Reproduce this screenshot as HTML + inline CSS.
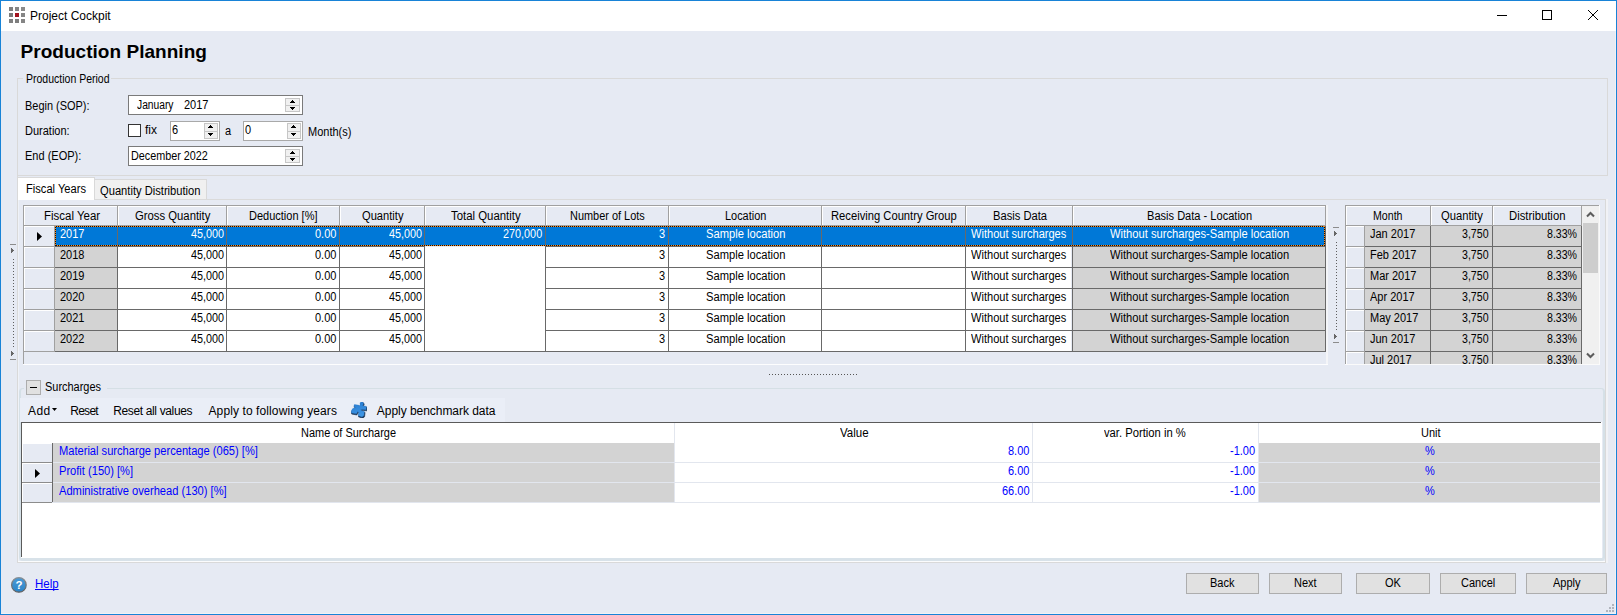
<!DOCTYPE html>
<html><head><meta charset="utf-8"><title>Project Cockpit</title>
<style>
html,body{margin:0;padding:0;}
body{width:1617px;height:615px;overflow:hidden;background:#e6eaf3;position:relative;font-family:"Liberation Sans",sans-serif;font-size:11px;color:#000;}
.a{position:absolute;}
.t{position:absolute;white-space:nowrap;transform-origin:0 0;}
#win{position:absolute;left:0;top:0;width:1615px;height:613px;border:1px solid #1883d7;z-index:5;pointer-events:none}
#title{position:absolute;left:1px;top:1px;width:1615px;height:30px;background:#fff;}
.inp{position:absolute;background:#fff;border:1px solid #7a7a7a;box-sizing:border-box;}
.btn{position:absolute;box-sizing:border-box;border:1px solid #adadad;background:#e1e1e1;height:21px;top:573px;}
</style></head><body>
<div id="title"></div>
<svg class="a" style="left:9px;top:7px" width="16" height="16" viewBox="0 0 16 16">
<rect x="0" y="0" width="4" height="4" fill="#7f7f7f"/>
<rect x="6" y="0" width="4" height="4" fill="#858585"/>
<rect x="12" y="0" width="4" height="4" fill="#8a8a8a"/>
<rect x="0" y="6" width="4" height="4" fill="#7a7a7a"/>
<rect x="6" y="6" width="4" height="4" fill="#a3131f"/>
<rect x="12" y="6" width="4" height="4" fill="#858585"/>
<rect x="0" y="12" width="4" height="4" fill="#808080"/>
<rect x="6" y="12" width="4" height="4" fill="#7d7d7d"/>
<rect x="12" y="12" width="4" height="4" fill="#858585"/>
</svg>
<div class="t" style="left:30.00px;top:9px;font-size:12px;line-height:14px;height:14px;">Project Cockpit</div>
<svg class="a" style="left:1480px;top:1px" width="136" height="30" viewBox="0 0 136 30" fill="none" stroke="#000" stroke-width="1"><path d="M17 14.5h10"/><rect x="62.5" y="9.5" width="9" height="9"/><path d="M108 9l10 10M118 9l-10 10"/></svg>
<div class="t" style="left:20.50px;top:40px;font-size:19px;line-height:23px;height:23px;letter-spacing:0.034px;font-weight:bold;">Production Planning</div>
<div class="a" style="left:17px;top:78px;width:1591px;height:1px;background:#d9d9d9;"></div>
<div class="a" style="left:17px;top:78px;width:1px;height:485px;background:#d9d9d9;"></div>
<div class="a" style="left:1607px;top:78px;width:1px;height:98px;background:#d9d9d9;"></div>
<div class="a" style="left:1605px;top:199px;width:1px;height:364px;background:#d9d9d9;"></div>
<div class="a" style="left:17px;top:562px;width:1589px;height:1px;background:#d9d9d9;"></div>
<div class="a" style="left:1606px;top:199px;width:2px;height:364px;background:#f1f2f6;"></div>
<div class="a" style="left:18px;top:561px;width:1587px;height:1px;background:#fbfcfd;"></div>
<div class="a" style="left:18px;top:199px;width:1px;height:362px;background:#eff2f8;"></div>
<div class="a" style="left:23px;top:72px;width:88px;height:13px;background:#e6eaf3;"></div>
<div class="t" style="left:26.00px;top:72px;font-size:12px;line-height:14px;height:14px;transform:scaleX(0.8754);">Production Period</div>
<div class="a" style="left:18px;top:175px;width:1590px;height:1px;background:#d9d9d9;"></div>
<div class="t" style="left:25.00px;top:99px;font-size:12px;line-height:14px;height:14px;transform:scaleX(0.9124);">Begin (SOP):</div>
<div class="t" style="left:25.00px;top:124px;font-size:12px;line-height:14px;height:14px;transform:scaleX(0.9167);">Duration:</div>
<div class="t" style="left:25.00px;top:149px;font-size:12px;line-height:14px;height:14px;transform:scaleX(0.9167);">End (EOP):</div>
<div class="inp" style="left:128px;top:95px;width:175px;height:20px"></div>
<div class="t" style="left:136.50px;top:98px;font-size:12px;line-height:14px;height:14px;transform:scaleX(0.8550);">January</div>
<div class="t" style="left:184.00px;top:98px;font-size:12px;line-height:14px;height:14px;transform:scaleX(0.9167);">2017</div>
<div class="a" style="left:285px;top:98px;width:15px;height:14px;background:#f0f0f0;box-sizing:border-box;border:1px solid #c6c6c6;"></div>
<div class="a" style="left:286px;top:105px;width:13px;height:1px;background:#c6c6c6;"></div>
<div class="a" style="left:292px;top:100px;width:1px;height:1px;background:#000;"></div>
<div class="a" style="left:291px;top:101px;width:3px;height:1px;background:#000;"></div>
<div class="a" style="left:290px;top:102px;width:5px;height:1px;background:#000;"></div>
<div class="a" style="left:290px;top:107px;width:5px;height:1px;background:#000;"></div>
<div class="a" style="left:291px;top:108px;width:3px;height:1px;background:#000;"></div>
<div class="a" style="left:292px;top:109px;width:1px;height:1px;background:#000;"></div>
<div class="a" style="left:128px;top:124px;width:13px;height:13px;box-sizing:border-box;border:1px solid #333;background:#fff"></div>
<div class="t" style="left:145.00px;top:123px;font-size:12px;line-height:14px;height:14px;transform:scaleX(1.0000);">fix</div>
<div class="inp" style="left:170px;top:121px;width:50px;height:20px;border-color:#a9a9a9"></div>
<div class="t" style="left:172.30px;top:123px;font-size:12px;line-height:14px;height:14px;transform:scaleX(0.9167);">6</div>
<div class="a" style="left:204px;top:123px;width:14px;height:16px;background:#f0f0f0;box-sizing:border-box;border:1px solid #c6c6c6;"></div>
<div class="a" style="left:205px;top:131px;width:12px;height:1px;background:#c6c6c6;"></div>
<div class="a" style="left:210px;top:125px;width:1px;height:1px;background:#000;"></div>
<div class="a" style="left:209px;top:126px;width:3px;height:1px;background:#000;"></div>
<div class="a" style="left:208px;top:127px;width:5px;height:1px;background:#000;"></div>
<div class="a" style="left:208px;top:133px;width:5px;height:1px;background:#000;"></div>
<div class="a" style="left:209px;top:134px;width:3px;height:1px;background:#000;"></div>
<div class="a" style="left:210px;top:135px;width:1px;height:1px;background:#000;"></div>
<div class="t" style="left:225.00px;top:124px;font-size:12px;line-height:14px;height:14px;transform:scaleX(0.9167);">a</div>
<div class="inp" style="left:243px;top:121px;width:60px;height:20px;border-color:#a9a9a9"></div>
<div class="t" style="left:245.00px;top:123px;font-size:12px;line-height:14px;height:14px;transform:scaleX(0.9167);">0</div>
<div class="a" style="left:287px;top:123px;width:14px;height:16px;background:#f0f0f0;box-sizing:border-box;border:1px solid #c6c6c6;"></div>
<div class="a" style="left:288px;top:131px;width:12px;height:1px;background:#c6c6c6;"></div>
<div class="a" style="left:293px;top:125px;width:1px;height:1px;background:#000;"></div>
<div class="a" style="left:292px;top:126px;width:3px;height:1px;background:#000;"></div>
<div class="a" style="left:291px;top:127px;width:5px;height:1px;background:#000;"></div>
<div class="a" style="left:291px;top:133px;width:5px;height:1px;background:#000;"></div>
<div class="a" style="left:292px;top:134px;width:3px;height:1px;background:#000;"></div>
<div class="a" style="left:293px;top:135px;width:1px;height:1px;background:#000;"></div>
<div class="t" style="left:308.30px;top:125px;font-size:12px;line-height:14px;height:14px;transform:scaleX(0.9167);">Month(s)</div>
<div class="inp" style="left:128px;top:146px;width:175px;height:20px"></div>
<div class="t" style="left:130.80px;top:149px;font-size:12px;line-height:14px;height:14px;transform:scaleX(0.9003);">December 2022</div>
<div class="a" style="left:285px;top:149px;width:15px;height:14px;background:#f0f0f0;box-sizing:border-box;border:1px solid #c6c6c6;"></div>
<div class="a" style="left:286px;top:156px;width:13px;height:1px;background:#c6c6c6;"></div>
<div class="a" style="left:292px;top:151px;width:1px;height:1px;background:#000;"></div>
<div class="a" style="left:291px;top:152px;width:3px;height:1px;background:#000;"></div>
<div class="a" style="left:290px;top:153px;width:5px;height:1px;background:#000;"></div>
<div class="a" style="left:290px;top:158px;width:5px;height:1px;background:#000;"></div>
<div class="a" style="left:291px;top:159px;width:3px;height:1px;background:#000;"></div>
<div class="a" style="left:292px;top:160px;width:1px;height:1px;background:#000;"></div>
<div class="a" style="left:94px;top:179px;width:113px;height:20px;background:#f0f0f0;box-sizing:border-box;border:1px solid #d9d9d9;border-left:none;border-bottom:none;"></div>
<div class="a" style="left:94px;top:199px;width:1512px;height:1px;background:#dadada;"></div>
<div class="a" style="left:17px;top:177px;width:78px;height:23px;background:#fff;box-sizing:border-box;border:1px solid #d9d9d9;border-bottom:none;"></div>
<div class="t" style="left:26.00px;top:182px;font-size:12px;line-height:14px;height:14px;transform:scaleX(0.9274);">Fiscal Years</div>
<div class="t" style="left:100.00px;top:184px;font-size:12px;line-height:14px;height:14px;transform:scaleX(0.9302);">Quantity Distribution</div>
<div class="a" style="left:23px;top:205px;width:1303px;height:160px;background:#e6eaf3;"></div>
<div class="a" style="left:55px;top:226px;width:62px;height:20px;background:#d3d3d3;"></div>
<div class="a" style="left:118px;top:226px;width:953px;height:20px;background:#fff;"></div>
<div class="a" style="left:1073px;top:226px;width:252px;height:20px;background:#d3d3d3;"></div>
<div class="a" style="left:55px;top:247px;width:62px;height:20px;background:#d3d3d3;"></div>
<div class="a" style="left:118px;top:247px;width:953px;height:20px;background:#fff;"></div>
<div class="a" style="left:1073px;top:247px;width:252px;height:20px;background:#d3d3d3;"></div>
<div class="a" style="left:55px;top:268px;width:62px;height:20px;background:#d3d3d3;"></div>
<div class="a" style="left:118px;top:268px;width:953px;height:20px;background:#fff;"></div>
<div class="a" style="left:1073px;top:268px;width:252px;height:20px;background:#d3d3d3;"></div>
<div class="a" style="left:55px;top:289px;width:62px;height:20px;background:#d3d3d3;"></div>
<div class="a" style="left:118px;top:289px;width:953px;height:20px;background:#fff;"></div>
<div class="a" style="left:1073px;top:289px;width:252px;height:20px;background:#d3d3d3;"></div>
<div class="a" style="left:55px;top:310px;width:62px;height:20px;background:#d3d3d3;"></div>
<div class="a" style="left:118px;top:310px;width:953px;height:20px;background:#fff;"></div>
<div class="a" style="left:1073px;top:310px;width:252px;height:20px;background:#d3d3d3;"></div>
<div class="a" style="left:55px;top:331px;width:62px;height:20px;background:#d3d3d3;"></div>
<div class="a" style="left:118px;top:331px;width:953px;height:20px;background:#fff;"></div>
<div class="a" style="left:1073px;top:331px;width:252px;height:20px;background:#d3d3d3;"></div>
<div class="a" style="left:54px;top:226px;width:1272px;height:20px;background:#0078d7;"></div>
<div class="a" style="left:23px;top:205px;width:1303px;height:1px;background:#a0a0a0;"></div>
<div class="a" style="left:23px;top:205px;width:1px;height:159px;background:#a0a0a0;"></div>
<div class="a" style="left:24px;top:225px;width:1302px;height:1px;background:#a0a0a0;"></div>
<div class="a" style="left:55px;top:246px;width:369px;height:1px;background:#696969;"></div>
<div class="a" style="left:546px;top:246px;width:780px;height:1px;background:#696969;"></div>
<div class="a" style="left:55px;top:267px;width:369px;height:1px;background:#696969;"></div>
<div class="a" style="left:546px;top:267px;width:780px;height:1px;background:#696969;"></div>
<div class="a" style="left:55px;top:288px;width:369px;height:1px;background:#696969;"></div>
<div class="a" style="left:546px;top:288px;width:780px;height:1px;background:#696969;"></div>
<div class="a" style="left:55px;top:309px;width:369px;height:1px;background:#696969;"></div>
<div class="a" style="left:546px;top:309px;width:780px;height:1px;background:#696969;"></div>
<div class="a" style="left:55px;top:330px;width:369px;height:1px;background:#696969;"></div>
<div class="a" style="left:546px;top:330px;width:780px;height:1px;background:#696969;"></div>
<div class="a" style="left:55px;top:351px;width:369px;height:1px;background:#696969;"></div>
<div class="a" style="left:546px;top:351px;width:780px;height:1px;background:#696969;"></div>
<div class="a" style="left:55px;top:351px;width:1271px;height:1px;background:#696969;"></div>
<div class="a" style="left:117px;top:206px;width:1px;height:20px;background:#a0a0a0;"></div>
<div class="a" style="left:117px;top:226px;width:1px;height:126px;background:#696969;"></div>
<div class="a" style="left:226px;top:206px;width:1px;height:20px;background:#a0a0a0;"></div>
<div class="a" style="left:226px;top:226px;width:1px;height:126px;background:#696969;"></div>
<div class="a" style="left:339px;top:206px;width:1px;height:20px;background:#a0a0a0;"></div>
<div class="a" style="left:339px;top:226px;width:1px;height:126px;background:#696969;"></div>
<div class="a" style="left:424px;top:206px;width:1px;height:20px;background:#a0a0a0;"></div>
<div class="a" style="left:424px;top:226px;width:1px;height:126px;background:#696969;"></div>
<div class="a" style="left:545px;top:206px;width:1px;height:20px;background:#a0a0a0;"></div>
<div class="a" style="left:545px;top:226px;width:1px;height:126px;background:#696969;"></div>
<div class="a" style="left:668px;top:206px;width:1px;height:20px;background:#a0a0a0;"></div>
<div class="a" style="left:668px;top:226px;width:1px;height:126px;background:#696969;"></div>
<div class="a" style="left:821px;top:206px;width:1px;height:20px;background:#a0a0a0;"></div>
<div class="a" style="left:821px;top:226px;width:1px;height:126px;background:#696969;"></div>
<div class="a" style="left:965px;top:206px;width:1px;height:20px;background:#a0a0a0;"></div>
<div class="a" style="left:965px;top:226px;width:1px;height:126px;background:#696969;"></div>
<div class="a" style="left:1072px;top:206px;width:1px;height:20px;background:#a0a0a0;"></div>
<div class="a" style="left:1072px;top:226px;width:1px;height:126px;background:#696969;"></div>
<div class="a" style="left:1325px;top:206px;width:1px;height:20px;background:#a0a0a0;"></div>
<div class="a" style="left:1325px;top:226px;width:1px;height:126px;background:#696969;"></div>
<div class="a" style="left:54px;top:226px;width:1px;height:126px;background:#a0a0a0;"></div>
<div class="a" style="left:24px;top:246px;width:31px;height:1px;background:#a0a0a0;"></div>
<div class="a" style="left:24px;top:267px;width:31px;height:1px;background:#a0a0a0;"></div>
<div class="a" style="left:24px;top:288px;width:31px;height:1px;background:#a0a0a0;"></div>
<div class="a" style="left:24px;top:309px;width:31px;height:1px;background:#a0a0a0;"></div>
<div class="a" style="left:24px;top:330px;width:31px;height:1px;background:#a0a0a0;"></div>
<div class="a" style="left:24px;top:351px;width:31px;height:1px;background:#a0a0a0;"></div>
<div class="a" style="left:24px;top:206px;width:1px;height:19px;background:#fff;"></div>
<div class="a" style="left:118px;top:206px;width:1px;height:19px;background:#fff;"></div>
<div class="a" style="left:227px;top:206px;width:1px;height:19px;background:#fff;"></div>
<div class="a" style="left:340px;top:206px;width:1px;height:19px;background:#fff;"></div>
<div class="a" style="left:425px;top:206px;width:1px;height:19px;background:#fff;"></div>
<div class="a" style="left:546px;top:206px;width:1px;height:19px;background:#fff;"></div>
<div class="a" style="left:669px;top:206px;width:1px;height:19px;background:#fff;"></div>
<div class="a" style="left:822px;top:206px;width:1px;height:19px;background:#fff;"></div>
<div class="a" style="left:966px;top:206px;width:1px;height:19px;background:#fff;"></div>
<div class="a" style="left:1073px;top:206px;width:1px;height:19px;background:#fff;"></div>
<div class="a" style="left:24px;top:206px;width:1301px;height:1px;background:#fff;"></div>
<div class="a" style="left:117px;top:206px;width:1px;height:1px;background:#a0a0a0;"></div>
<div class="a" style="left:226px;top:206px;width:1px;height:1px;background:#a0a0a0;"></div>
<div class="a" style="left:339px;top:206px;width:1px;height:1px;background:#a0a0a0;"></div>
<div class="a" style="left:424px;top:206px;width:1px;height:1px;background:#a0a0a0;"></div>
<div class="a" style="left:545px;top:206px;width:1px;height:1px;background:#a0a0a0;"></div>
<div class="a" style="left:668px;top:206px;width:1px;height:1px;background:#a0a0a0;"></div>
<div class="a" style="left:821px;top:206px;width:1px;height:1px;background:#a0a0a0;"></div>
<div class="a" style="left:965px;top:206px;width:1px;height:1px;background:#a0a0a0;"></div>
<div class="a" style="left:1072px;top:206px;width:1px;height:1px;background:#a0a0a0;"></div>
<div class="a" style="left:1325px;top:206px;width:1px;height:1px;background:#a0a0a0;"></div>
<div class="a" style="left:24px;top:226px;width:30px;height:1px;background:#fff;"></div>
<div class="a" style="left:24px;top:226px;width:1px;height:20px;background:#fff;"></div>
<div class="a" style="left:24px;top:247px;width:30px;height:1px;background:#fff;"></div>
<div class="a" style="left:24px;top:247px;width:1px;height:20px;background:#fff;"></div>
<div class="a" style="left:24px;top:268px;width:30px;height:1px;background:#fff;"></div>
<div class="a" style="left:24px;top:268px;width:1px;height:20px;background:#fff;"></div>
<div class="a" style="left:24px;top:289px;width:30px;height:1px;background:#fff;"></div>
<div class="a" style="left:24px;top:289px;width:1px;height:20px;background:#fff;"></div>
<div class="a" style="left:24px;top:310px;width:30px;height:1px;background:#fff;"></div>
<div class="a" style="left:24px;top:310px;width:1px;height:20px;background:#fff;"></div>
<div class="a" style="left:24px;top:331px;width:30px;height:1px;background:#fff;"></div>
<div class="a" style="left:24px;top:331px;width:1px;height:20px;background:#fff;"></div>
<div class="a" style="left:425px;top:247px;width:120px;height:104px;background:#fff;"></div>
<div class="a" style="left:55px;top:226px;width:1270px;height:1px;background:repeating-linear-gradient(to right,#ff8c1a 0 1px,#101010 1px 2px);"></div>
<div class="a" style="left:55px;top:245px;width:1270px;height:1px;background:repeating-linear-gradient(to right,#ff8c1a 0 1px,#101010 1px 2px);"></div>
<div class="a" style="left:55px;top:226px;width:1px;height:20px;background:repeating-linear-gradient(to bottom,#ff8c1a 0 1px,#101010 1px 2px);"></div>
<div class="a" style="left:1324px;top:226px;width:1px;height:20px;background:repeating-linear-gradient(to bottom,#ff8c1a 0 1px,#101010 1px 2px);"></div>
<div class="t" style="left:43.55px;top:209px;font-size:12px;line-height:14px;height:14px;transform:scaleX(0.9559);">Fiscal Year</div>
<div class="t" style="left:135.32px;top:209px;font-size:12px;line-height:14px;height:14px;transform:scaleX(0.9417);">Gross Quantity</div>
<div class="t" style="left:249.36px;top:209px;font-size:12px;line-height:14px;height:14px;transform:scaleX(0.9167);">Deduction [%]</div>
<div class="t" style="left:361.57px;top:209px;font-size:12px;line-height:14px;height:14px;transform:scaleX(0.9279);">Quantity</div>
<div class="t" style="left:450.77px;top:209px;font-size:12px;line-height:14px;height:14px;transform:scaleX(0.9494);">Total Quantity</div>
<div class="t" style="left:569.95px;top:209px;font-size:12px;line-height:14px;height:14px;transform:scaleX(0.9106);">Number of Lots</div>
<div class="t" style="left:725.16px;top:209px;font-size:12px;line-height:14px;height:14px;transform:scaleX(0.9101);">Location</div>
<div class="t" style="left:831.20px;top:209px;font-size:12px;line-height:14px;height:14px;transform:scaleX(0.9337);">Receiving Country Group</div>
<div class="t" style="left:992.96px;top:209px;font-size:12px;line-height:14px;height:14px;transform:scaleX(0.9322);">Basis Data</div>
<div class="t" style="left:1146.73px;top:209px;font-size:12px;line-height:14px;height:14px;transform:scaleX(0.9219);">Basis Data - Location</div>
<svg class="a" style="left:36px;top:231px" width="8" height="11"><path d="M1 1v9l5-4.5z" fill="#000"/></svg>
<div class="t" style="left:60.00px;top:227px;font-size:12px;line-height:14px;height:14px;transform:scaleX(0.9167);color:#fff;">2017</div>
<div class="t" style="left:191.26px;top:227px;font-size:12px;line-height:14px;height:14px;transform:scaleX(0.9003);color:#fff;">45,000</div>
<div class="t" style="left:315.09px;top:227px;font-size:12px;line-height:14px;height:14px;transform:scaleX(0.9167);color:#fff;">0.00</div>
<div class="t" style="left:388.76px;top:227px;font-size:12px;line-height:14px;height:14px;transform:scaleX(0.9003);color:#fff;">45,000</div>
<div class="t" style="left:502.64px;top:227px;font-size:12px;line-height:14px;height:14px;transform:scaleX(0.9028);color:#fff;">270,000</div>
<div class="t" style="left:659.18px;top:227px;font-size:12px;line-height:14px;height:14px;transform:scaleX(0.9167);color:#fff;">3</div>
<div class="t" style="left:706.05px;top:227px;font-size:12px;line-height:14px;height:14px;transform:scaleX(0.9312);color:#fff;">Sample location</div>
<div class="t" style="left:971.05px;top:227px;font-size:12px;line-height:14px;height:14px;transform:scaleX(0.9219);color:#fff;">Without surcharges</div>
<div class="t" style="left:1110.40px;top:227px;font-size:12px;line-height:14px;height:14px;transform:scaleX(0.9297);color:#fff;">Without surcharges-Sample location</div>
<div class="t" style="left:60.00px;top:248px;font-size:12px;line-height:14px;height:14px;transform:scaleX(0.9167);color:#000;">2018</div>
<div class="t" style="left:191.26px;top:248px;font-size:12px;line-height:14px;height:14px;transform:scaleX(0.9003);color:#000;">45,000</div>
<div class="t" style="left:315.09px;top:248px;font-size:12px;line-height:14px;height:14px;transform:scaleX(0.9167);color:#000;">0.00</div>
<div class="t" style="left:388.76px;top:248px;font-size:12px;line-height:14px;height:14px;transform:scaleX(0.9003);color:#000;">45,000</div>
<div class="t" style="left:659.18px;top:248px;font-size:12px;line-height:14px;height:14px;transform:scaleX(0.9167);color:#000;">3</div>
<div class="t" style="left:706.05px;top:248px;font-size:12px;line-height:14px;height:14px;transform:scaleX(0.9312);color:#000;">Sample location</div>
<div class="t" style="left:971.05px;top:248px;font-size:12px;line-height:14px;height:14px;transform:scaleX(0.9219);color:#000;">Without surcharges</div>
<div class="t" style="left:1110.40px;top:248px;font-size:12px;line-height:14px;height:14px;transform:scaleX(0.9297);color:#000;">Without surcharges-Sample location</div>
<div class="t" style="left:60.00px;top:269px;font-size:12px;line-height:14px;height:14px;transform:scaleX(0.9167);color:#000;">2019</div>
<div class="t" style="left:191.26px;top:269px;font-size:12px;line-height:14px;height:14px;transform:scaleX(0.9003);color:#000;">45,000</div>
<div class="t" style="left:315.09px;top:269px;font-size:12px;line-height:14px;height:14px;transform:scaleX(0.9167);color:#000;">0.00</div>
<div class="t" style="left:388.76px;top:269px;font-size:12px;line-height:14px;height:14px;transform:scaleX(0.9003);color:#000;">45,000</div>
<div class="t" style="left:659.18px;top:269px;font-size:12px;line-height:14px;height:14px;transform:scaleX(0.9167);color:#000;">3</div>
<div class="t" style="left:706.05px;top:269px;font-size:12px;line-height:14px;height:14px;transform:scaleX(0.9312);color:#000;">Sample location</div>
<div class="t" style="left:971.05px;top:269px;font-size:12px;line-height:14px;height:14px;transform:scaleX(0.9219);color:#000;">Without surcharges</div>
<div class="t" style="left:1110.40px;top:269px;font-size:12px;line-height:14px;height:14px;transform:scaleX(0.9297);color:#000;">Without surcharges-Sample location</div>
<div class="t" style="left:60.00px;top:290px;font-size:12px;line-height:14px;height:14px;transform:scaleX(0.9167);color:#000;">2020</div>
<div class="t" style="left:191.26px;top:290px;font-size:12px;line-height:14px;height:14px;transform:scaleX(0.9003);color:#000;">45,000</div>
<div class="t" style="left:315.09px;top:290px;font-size:12px;line-height:14px;height:14px;transform:scaleX(0.9167);color:#000;">0.00</div>
<div class="t" style="left:388.76px;top:290px;font-size:12px;line-height:14px;height:14px;transform:scaleX(0.9003);color:#000;">45,000</div>
<div class="t" style="left:659.18px;top:290px;font-size:12px;line-height:14px;height:14px;transform:scaleX(0.9167);color:#000;">3</div>
<div class="t" style="left:706.05px;top:290px;font-size:12px;line-height:14px;height:14px;transform:scaleX(0.9312);color:#000;">Sample location</div>
<div class="t" style="left:971.05px;top:290px;font-size:12px;line-height:14px;height:14px;transform:scaleX(0.9219);color:#000;">Without surcharges</div>
<div class="t" style="left:1110.40px;top:290px;font-size:12px;line-height:14px;height:14px;transform:scaleX(0.9297);color:#000;">Without surcharges-Sample location</div>
<div class="t" style="left:60.00px;top:311px;font-size:12px;line-height:14px;height:14px;transform:scaleX(0.9167);color:#000;">2021</div>
<div class="t" style="left:191.26px;top:311px;font-size:12px;line-height:14px;height:14px;transform:scaleX(0.9003);color:#000;">45,000</div>
<div class="t" style="left:315.09px;top:311px;font-size:12px;line-height:14px;height:14px;transform:scaleX(0.9167);color:#000;">0.00</div>
<div class="t" style="left:388.76px;top:311px;font-size:12px;line-height:14px;height:14px;transform:scaleX(0.9003);color:#000;">45,000</div>
<div class="t" style="left:659.18px;top:311px;font-size:12px;line-height:14px;height:14px;transform:scaleX(0.9167);color:#000;">3</div>
<div class="t" style="left:706.05px;top:311px;font-size:12px;line-height:14px;height:14px;transform:scaleX(0.9312);color:#000;">Sample location</div>
<div class="t" style="left:971.05px;top:311px;font-size:12px;line-height:14px;height:14px;transform:scaleX(0.9219);color:#000;">Without surcharges</div>
<div class="t" style="left:1110.40px;top:311px;font-size:12px;line-height:14px;height:14px;transform:scaleX(0.9297);color:#000;">Without surcharges-Sample location</div>
<div class="t" style="left:60.00px;top:332px;font-size:12px;line-height:14px;height:14px;transform:scaleX(0.9167);color:#000;">2022</div>
<div class="t" style="left:191.26px;top:332px;font-size:12px;line-height:14px;height:14px;transform:scaleX(0.9003);color:#000;">45,000</div>
<div class="t" style="left:315.09px;top:332px;font-size:12px;line-height:14px;height:14px;transform:scaleX(0.9167);color:#000;">0.00</div>
<div class="t" style="left:388.76px;top:332px;font-size:12px;line-height:14px;height:14px;transform:scaleX(0.9003);color:#000;">45,000</div>
<div class="t" style="left:659.18px;top:332px;font-size:12px;line-height:14px;height:14px;transform:scaleX(0.9167);color:#000;">3</div>
<div class="t" style="left:706.05px;top:332px;font-size:12px;line-height:14px;height:14px;transform:scaleX(0.9312);color:#000;">Sample location</div>
<div class="t" style="left:971.05px;top:332px;font-size:12px;line-height:14px;height:14px;transform:scaleX(0.9219);color:#000;">Without surcharges</div>
<div class="t" style="left:1110.40px;top:332px;font-size:12px;line-height:14px;height:14px;transform:scaleX(0.9297);color:#000;">Without surcharges-Sample location</div>
<div class="a" style="left:23px;top:364px;width:1305px;height:1px;background:#fdfdfe;"></div>
<div class="a" style="left:1326px;top:205px;width:1px;height:159px;background:#f4f5f8;"></div>
<div class="a" style="left:1327px;top:205px;width:1px;height:159px;background:#f4f5f8;"></div>
<div class="a" style="left:1333px;top:227px;width:6px;height:1px;background:#8c8c8c;"></div>
<div class="a" style="left:1333px;top:342px;width:6px;height:1px;background:#8c8c8c;"></div>
<div class="a" style="left:1334px;top:231px;width:1px;height:5px;background:#666;"></div>
<div class="a" style="left:1335px;top:232px;width:1px;height:3px;background:#666;"></div>
<div class="a" style="left:1336px;top:233px;width:1px;height:1px;background:#666;"></div>
<div class="a" style="left:1334px;top:334px;width:1px;height:5px;background:#666;"></div>
<div class="a" style="left:1335px;top:335px;width:1px;height:3px;background:#666;"></div>
<div class="a" style="left:1336px;top:336px;width:1px;height:1px;background:#666;"></div>
<div class="a" style="left:1336px;top:242px;width:1px;height:88px;background:repeating-linear-gradient(to bottom,#5e5e5e 0 1px,transparent 1px 3px)"></div>
<div class="a" style="left:10px;top:244px;width:6px;height:1px;background:#8c8c8c;"></div>
<div class="a" style="left:10px;top:359px;width:6px;height:1px;background:#8c8c8c;"></div>
<div class="a" style="left:11px;top:248px;width:1px;height:5px;background:#666;"></div>
<div class="a" style="left:12px;top:249px;width:1px;height:3px;background:#666;"></div>
<div class="a" style="left:13px;top:250px;width:1px;height:1px;background:#666;"></div>
<div class="a" style="left:11px;top:351px;width:1px;height:5px;background:#666;"></div>
<div class="a" style="left:12px;top:352px;width:1px;height:3px;background:#666;"></div>
<div class="a" style="left:13px;top:353px;width:1px;height:1px;background:#666;"></div>
<div class="a" style="left:13px;top:259px;width:1px;height:89px;background:repeating-linear-gradient(to bottom,#5e5e5e 0 1px,transparent 1px 3px)"></div>
<div class="a" style="left:769px;top:374px;width:89px;height:1px;background:repeating-linear-gradient(to right,#555 0 1px,transparent 1px 3px)"></div>
<div class="a" style="left:1345px;top:205px;width:255px;height:160px;background:#e6eaf3;"></div>
<div class="a" style="left:1365px;top:226px;width:216px;height:20px;background:#d3d3d3;"></div>
<div class="a" style="left:1365px;top:247px;width:216px;height:20px;background:#d3d3d3;"></div>
<div class="a" style="left:1365px;top:268px;width:216px;height:20px;background:#d3d3d3;"></div>
<div class="a" style="left:1365px;top:289px;width:216px;height:20px;background:#d3d3d3;"></div>
<div class="a" style="left:1365px;top:310px;width:216px;height:20px;background:#d3d3d3;"></div>
<div class="a" style="left:1365px;top:331px;width:216px;height:20px;background:#d3d3d3;"></div>
<div class="a" style="left:1365px;top:352px;width:216px;height:13px;background:#d3d3d3;"></div>
<div class="a" style="left:1582px;top:206px;width:17px;height:158px;background:#f0f0f0;"></div>
<div class="a" style="left:1583px;top:223px;width:15px;height:50px;background:#cdcdcd;"></div>
<div class="a" style="left:1345px;top:205px;width:255px;height:1px;background:#a0a0a0;"></div>
<div class="a" style="left:1345px;top:205px;width:1px;height:159px;background:#a0a0a0;"></div>
<div class="a" style="left:1346px;top:225px;width:236px;height:1px;background:#a0a0a0;"></div>
<div class="a" style="left:1346px;top:246px;width:19px;height:1px;background:#a0a0a0;"></div>
<div class="a" style="left:1365px;top:246px;width:217px;height:1px;background:#696969;"></div>
<div class="a" style="left:1346px;top:267px;width:19px;height:1px;background:#a0a0a0;"></div>
<div class="a" style="left:1365px;top:267px;width:217px;height:1px;background:#696969;"></div>
<div class="a" style="left:1346px;top:288px;width:19px;height:1px;background:#a0a0a0;"></div>
<div class="a" style="left:1365px;top:288px;width:217px;height:1px;background:#696969;"></div>
<div class="a" style="left:1346px;top:309px;width:19px;height:1px;background:#a0a0a0;"></div>
<div class="a" style="left:1365px;top:309px;width:217px;height:1px;background:#696969;"></div>
<div class="a" style="left:1346px;top:330px;width:19px;height:1px;background:#a0a0a0;"></div>
<div class="a" style="left:1365px;top:330px;width:217px;height:1px;background:#696969;"></div>
<div class="a" style="left:1346px;top:351px;width:19px;height:1px;background:#a0a0a0;"></div>
<div class="a" style="left:1365px;top:351px;width:217px;height:1px;background:#696969;"></div>
<div class="a" style="left:1364px;top:226px;width:1px;height:138px;background:#a0a0a0;"></div>
<div class="a" style="left:1430px;top:206px;width:1px;height:20px;background:#a0a0a0;"></div>
<div class="a" style="left:1430px;top:226px;width:1px;height:138px;background:#696969;"></div>
<div class="a" style="left:1492px;top:206px;width:1px;height:20px;background:#a0a0a0;"></div>
<div class="a" style="left:1492px;top:226px;width:1px;height:138px;background:#696969;"></div>
<div class="a" style="left:1581px;top:206px;width:1px;height:20px;background:#a0a0a0;"></div>
<div class="a" style="left:1581px;top:226px;width:1px;height:138px;background:#696969;"></div>
<div class="a" style="left:1346px;top:206px;width:235px;height:1px;background:#fff;"></div>
<div class="a" style="left:1430px;top:206px;width:1px;height:1px;background:#a0a0a0;"></div>
<div class="a" style="left:1492px;top:206px;width:1px;height:1px;background:#a0a0a0;"></div>
<div class="a" style="left:1581px;top:206px;width:1px;height:1px;background:#a0a0a0;"></div>
<div class="a" style="left:1346px;top:206px;width:1px;height:19px;background:#fff;"></div>
<div class="a" style="left:1431px;top:206px;width:1px;height:19px;background:#fff;"></div>
<div class="a" style="left:1493px;top:206px;width:1px;height:19px;background:#fff;"></div>
<div class="a" style="left:1346px;top:226px;width:18px;height:1px;background:#fff;"></div>
<div class="a" style="left:1346px;top:226px;width:1px;height:20px;background:#fff;"></div>
<div class="a" style="left:1346px;top:247px;width:18px;height:1px;background:#fff;"></div>
<div class="a" style="left:1346px;top:247px;width:1px;height:20px;background:#fff;"></div>
<div class="a" style="left:1346px;top:268px;width:18px;height:1px;background:#fff;"></div>
<div class="a" style="left:1346px;top:268px;width:1px;height:20px;background:#fff;"></div>
<div class="a" style="left:1346px;top:289px;width:18px;height:1px;background:#fff;"></div>
<div class="a" style="left:1346px;top:289px;width:1px;height:20px;background:#fff;"></div>
<div class="a" style="left:1346px;top:310px;width:18px;height:1px;background:#fff;"></div>
<div class="a" style="left:1346px;top:310px;width:1px;height:20px;background:#fff;"></div>
<div class="a" style="left:1346px;top:331px;width:18px;height:1px;background:#fff;"></div>
<div class="a" style="left:1346px;top:331px;width:1px;height:20px;background:#fff;"></div>
<div class="a" style="left:1346px;top:352px;width:18px;height:1px;background:#fff;"></div>
<div class="a" style="left:1346px;top:352px;width:1px;height:12px;background:#fff;"></div>
<div class="t" style="left:1373.27px;top:209px;font-size:12px;line-height:14px;height:14px;transform:scaleX(0.8837);">Month</div>
<div class="t" style="left:1440.97px;top:209px;font-size:12px;line-height:14px;height:14px;transform:scaleX(0.9368);">Quantity</div>
<div class="t" style="left:1509.49px;top:209px;font-size:12px;line-height:14px;height:14px;transform:scaleX(0.9400);">Distribution</div>
<div class="a" style="left:1345px;top:205px;width:255px;height:159px;overflow:hidden">
<div class="t" style="left:25.00px;top:22px;font-size:12px;line-height:14px;height:14px;transform:scaleX(0.9167);">Jan 2017</div>
<div class="t" style="left:117.48px;top:22px;font-size:12px;line-height:14px;height:14px;transform:scaleX(0.8834);">3,750</div>
<div class="t" style="left:202.21px;top:22px;font-size:12px;line-height:14px;height:14px;transform:scaleX(0.8814);">8.33%</div>
<div class="t" style="left:25.00px;top:43px;font-size:12px;line-height:14px;height:14px;transform:scaleX(0.9167);">Feb 2017</div>
<div class="t" style="left:117.48px;top:43px;font-size:12px;line-height:14px;height:14px;transform:scaleX(0.8834);">3,750</div>
<div class="t" style="left:202.21px;top:43px;font-size:12px;line-height:14px;height:14px;transform:scaleX(0.8814);">8.33%</div>
<div class="t" style="left:25.00px;top:64px;font-size:12px;line-height:14px;height:14px;transform:scaleX(0.9167);">Mar 2017</div>
<div class="t" style="left:117.48px;top:64px;font-size:12px;line-height:14px;height:14px;transform:scaleX(0.8834);">3,750</div>
<div class="t" style="left:202.21px;top:64px;font-size:12px;line-height:14px;height:14px;transform:scaleX(0.8814);">8.33%</div>
<div class="t" style="left:25.00px;top:85px;font-size:12px;line-height:14px;height:14px;transform:scaleX(0.9167);">Apr 2017</div>
<div class="t" style="left:117.48px;top:85px;font-size:12px;line-height:14px;height:14px;transform:scaleX(0.8834);">3,750</div>
<div class="t" style="left:202.21px;top:85px;font-size:12px;line-height:14px;height:14px;transform:scaleX(0.8814);">8.33%</div>
<div class="t" style="left:25.00px;top:106px;font-size:12px;line-height:14px;height:14px;transform:scaleX(0.9167);">May 2017</div>
<div class="t" style="left:117.48px;top:106px;font-size:12px;line-height:14px;height:14px;transform:scaleX(0.8834);">3,750</div>
<div class="t" style="left:202.21px;top:106px;font-size:12px;line-height:14px;height:14px;transform:scaleX(0.8814);">8.33%</div>
<div class="t" style="left:25.00px;top:127px;font-size:12px;line-height:14px;height:14px;transform:scaleX(0.9167);">Jun 2017</div>
<div class="t" style="left:117.48px;top:127px;font-size:12px;line-height:14px;height:14px;transform:scaleX(0.8834);">3,750</div>
<div class="t" style="left:202.21px;top:127px;font-size:12px;line-height:14px;height:14px;transform:scaleX(0.8814);">8.33%</div>
<div class="t" style="left:25.00px;top:148px;font-size:12px;line-height:14px;height:14px;transform:scaleX(0.9167);">Jul 2017</div>
<div class="t" style="left:117.48px;top:148px;font-size:12px;line-height:14px;height:14px;transform:scaleX(0.8834);">3,750</div>
<div class="t" style="left:202.21px;top:148px;font-size:12px;line-height:14px;height:14px;transform:scaleX(0.8814);">8.33%</div>
</div>
<div class="a" style="left:1599px;top:205px;width:1px;height:160px;background:#fafafa;"></div>
<div class="a" style="left:1345px;top:364px;width:255px;height:1px;background:#fafafa;"></div>
<svg class="a" style="left:1582px;top:206px" width="17" height="17" viewBox="0 0 17 17"><path d="M5 10.5l3.5-3.5 3.5 3.5" fill="none" stroke="#5c5c5c" stroke-width="2.1"/></svg>
<svg class="a" style="left:1582px;top:347px" width="17" height="17" viewBox="0 0 17 17"><path d="M5 6.5l3.5 3.5 3.5-3.5" fill="none" stroke="#5c5c5c" stroke-width="2.1"/></svg>
<div class="a" style="left:19px;top:388px;width:1586px;height:173px;box-sizing:border-box;border:2px solid #d5e0e7;border-top:1px solid #d5dfe5;border-bottom:3px solid #d8e2e9;border-radius:4px;"></div>
<div class="a" style="left:24px;top:379px;width:83px;height:18px;background:#e6eaf3;"></div>
<div class="a" style="left:26px;top:380px;width:15px;height:15px;background:#e1e1e1;box-sizing:border-box;border:1px solid #adadad;"></div>
<div class="a" style="left:30px;top:387px;width:7px;height:1px;background:#000;"></div>
<div class="t" style="left:45.00px;top:380px;font-size:12px;line-height:14px;height:14px;transform:scaleX(0.9126);">Surcharges</div>
<div class="a" style="left:20px;top:398px;width:485px;height:24px;background:#eaeef7;"></div>
<div class="t" style="left:28.00px;top:404px;font-size:12px;line-height:14px;height:14px;letter-spacing:0.383px;">Add</div>
<svg class="a" style="left:52px;top:408px" width="5" height="3"><path d="M0 0h5l-2.5 3z" fill="#000"/></svg>
<div class="t" style="left:70.20px;top:404px;font-size:12px;line-height:14px;height:14px;letter-spacing:-0.709px;">Reset</div>
<div class="t" style="left:113.20px;top:404px;font-size:12px;line-height:14px;height:14px;letter-spacing:-0.357px;">Reset all values</div>
<div class="t" style="left:208.50px;top:404px;font-size:12px;line-height:14px;height:14px;letter-spacing:0.102px;">Apply to following years</div>
<div class="t" style="left:376.80px;top:404px;font-size:12px;line-height:14px;height:14px;letter-spacing:-0.040px;">Apply benchmark data</div>
<svg class="a" style="left:351px;top:402px" width="16" height="16" viewBox="0 0 16 16"><defs><linearGradient id="pz" x1="0" y1="0" x2="0.3" y2="1"><stop offset="0" stop-color="#2579cf"/><stop offset="1" stop-color="#3f96e4"/></linearGradient></defs><path d="M3.4 2.8 L6.8 3.1 L9.0 3.9 L9.5 2.9 C8.8 1.3 9.7 0.0 10.9 0.0 C12.4 0.0 13.3 1.2 12.7 2.5 L12.0 3.9 L15.9 4.7 L15.6 8.3 L12.2 7.9 L10.0 8.2 L10.6 9.0 L13.8 9.9 L13.3 14.2 L11.4 15.8 L7.2 14.2 L8.0 11.2 L6.9 10.0 L5.6 12.4 L0.5 11.5 L0.1 9.6 L1.7 6.9 L4.6 5.8 L2.9 4.5 Z" transform="translate(0.25,0.55)" fill="#1b3658" stroke="#1b3658" stroke-width=".7" stroke-linejoin="round"/><path d="M3.4 2.8 L6.8 3.1 L9.0 3.9 L9.5 2.9 C8.8 1.3 9.7 0.0 10.9 0.0 C12.4 0.0 13.3 1.2 12.7 2.5 L12.0 3.9 L15.9 4.7 L15.6 8.3 L12.2 7.9 L10.0 8.2 L10.6 9.0 L13.8 9.9 L13.3 14.2 L11.4 15.8 L7.2 14.2 L8.0 11.2 L6.9 10.0 L5.6 12.4 L0.5 11.5 L0.1 9.6 L1.7 6.9 L4.6 5.8 L2.9 4.5 Z" transform="translate(0.1,-0.1) scale(0.96)" fill="url(#pz)" stroke="#2a7fd2" stroke-width=".35" stroke-linejoin="round"/></svg>
<div class="a" style="left:21px;top:422px;width:1581px;height:136px;background:#fff;"></div>
<div class="a" style="left:21px;top:422px;width:1580px;height:1px;background:#5a5a5a;"></div>
<div class="a" style="left:21px;top:422px;width:1px;height:135px;background:#5a5a5a;"></div>
<div class="a" style="left:23px;top:444px;width:29px;height:18px;background:#e6eaf3;"></div>
<div class="a" style="left:53px;top:443px;width:621px;height:19px;background:#d3d3d3;"></div>
<div class="a" style="left:1259px;top:443px;width:341px;height:19px;background:#d3d3d3;"></div>
<div class="a" style="left:22px;top:462px;width:1578px;height:1px;background:#e2e6ee;"></div>
<div class="a" style="left:22px;top:462px;width:30px;height:1px;background:#8c8c8c;"></div>
<div class="a" style="left:23px;top:464px;width:29px;height:18px;background:#e6eaf3;"></div>
<div class="a" style="left:53px;top:463px;width:621px;height:19px;background:#d3d3d3;"></div>
<div class="a" style="left:1259px;top:463px;width:341px;height:19px;background:#d3d3d3;"></div>
<div class="a" style="left:22px;top:482px;width:1578px;height:1px;background:#e2e6ee;"></div>
<div class="a" style="left:22px;top:482px;width:30px;height:1px;background:#8c8c8c;"></div>
<div class="a" style="left:23px;top:484px;width:29px;height:18px;background:#e6eaf3;"></div>
<div class="a" style="left:53px;top:483px;width:621px;height:19px;background:#d3d3d3;"></div>
<div class="a" style="left:1259px;top:483px;width:341px;height:19px;background:#d3d3d3;"></div>
<div class="a" style="left:22px;top:502px;width:1578px;height:1px;background:#e2e6ee;"></div>
<div class="a" style="left:22px;top:502px;width:30px;height:1px;background:#8c8c8c;"></div>
<div class="a" style="left:52px;top:443px;width:1px;height:59px;background:#696969;"></div>
<div class="a" style="left:674px;top:423px;width:1px;height:79px;background:#e2e6ee;"></div>
<div class="a" style="left:1032px;top:423px;width:1px;height:79px;background:#e2e6ee;"></div>
<div class="a" style="left:1258px;top:423px;width:1px;height:79px;background:#e2e6ee;"></div>
<div class="t" style="left:301.00px;top:426px;font-size:12px;line-height:14px;height:14px;transform:scaleX(0.9131);">Name of Surcharge</div>
<div class="t" style="left:839.79px;top:426px;font-size:12px;line-height:14px;height:14px;transform:scaleX(0.9603);">Value</div>
<div class="t" style="left:1104.30px;top:426px;font-size:12px;line-height:14px;height:14px;transform:scaleX(0.9361);">var. Portion in %</div>
<div class="t" style="left:1420.52px;top:426px;font-size:12px;line-height:14px;height:14px;transform:scaleX(0.9167);">Unit</div>
<div class="t" style="left:59.30px;top:444px;font-size:12px;line-height:14px;height:14px;transform:scaleX(0.9260);color:#0000ff;">Material surcharge percentage (065) [%]</div>
<div class="t" style="left:1008.09px;top:444px;font-size:12px;line-height:14px;height:14px;transform:scaleX(0.9167);color:#0000ff;">8.00</div>
<div class="t" style="left:1229.93px;top:444px;font-size:12px;line-height:14px;height:14px;transform:scaleX(0.9167);color:#0000ff;">-1.00</div>
<div class="t" style="left:1424.61px;top:444px;font-size:12px;line-height:14px;height:14px;transform:scaleX(0.9167);color:#0000ff;">%</div>
<div class="t" style="left:59.30px;top:464px;font-size:12px;line-height:14px;height:14px;transform:scaleX(0.9254);color:#0000ff;">Profit (150) [%]</div>
<div class="t" style="left:1008.09px;top:464px;font-size:12px;line-height:14px;height:14px;transform:scaleX(0.9167);color:#0000ff;">6.00</div>
<div class="t" style="left:1229.93px;top:464px;font-size:12px;line-height:14px;height:14px;transform:scaleX(0.9167);color:#0000ff;">-1.00</div>
<div class="t" style="left:1424.61px;top:464px;font-size:12px;line-height:14px;height:14px;transform:scaleX(0.9167);color:#0000ff;">%</div>
<div class="t" style="left:59.30px;top:484px;font-size:12px;line-height:14px;height:14px;transform:scaleX(0.9277);color:#0000ff;">Administrative overhead (130) [%]</div>
<div class="t" style="left:1001.98px;top:484px;font-size:12px;line-height:14px;height:14px;transform:scaleX(0.9167);color:#0000ff;">66.00</div>
<div class="t" style="left:1229.93px;top:484px;font-size:12px;line-height:14px;height:14px;transform:scaleX(0.9167);color:#0000ff;">-1.00</div>
<div class="t" style="left:1424.61px;top:484px;font-size:12px;line-height:14px;height:14px;transform:scaleX(0.9167);color:#0000ff;">%</div>
<svg class="a" style="left:34px;top:468px" width="8" height="11"><path d="M1 1v9l5-4.5z" fill="#000"/></svg>
<div class="a" style="left:1615px;top:31px;width:1px;height:583px;background:#f1f1f5;"></div>
<div class="a" style="left:1px;top:613px;width:1615px;height:1px;background:#f1f1f5;"></div>
<svg class="a" style="left:10px;top:576px" width="18" height="18" viewBox="0 0 18 18"><defs><linearGradient id="hg" x1="0" y1="0" x2="0" y2="1"><stop offset="0" stop-color="#4a9ad6"/><stop offset="1" stop-color="#2a84c8"/></linearGradient><linearGradient id="hr" x1="0" y1="0" x2="0" y2="1"><stop offset="0" stop-color="#8a9096"/><stop offset="1" stop-color="#5a5a5a"/></linearGradient></defs><circle cx="8.9" cy="8.9" r="7.3" fill="url(#hg)" stroke="url(#hr)" stroke-width="1.2"/><text x="8.9" y="13" text-anchor="middle" font-family="Liberation Sans, sans-serif" font-weight="bold" font-size="11.5" fill="#fff">?</text></svg>
<div class="t" style="left:35.00px;top:577px;font-size:12px;line-height:14px;height:14px;transform:scaleX(0.9563);color:#0000ff;text-decoration:underline;text-decoration-skip-ink:none;">Help</div>
<div class="btn" style="left:1186px;width:73px"></div>
<div class="t" style="left:1210.27px;top:576px;font-size:12px;line-height:14px;height:14px;transform:scaleX(0.9167);">Back</div>
<div class="btn" style="left:1269px;width:73px"></div>
<div class="t" style="left:1294.19px;top:576px;font-size:12px;line-height:14px;height:14px;transform:scaleX(0.9167);">Next</div>
<div class="btn" style="left:1356px;width:74px"></div>
<div class="t" style="left:1385.05px;top:576px;font-size:12px;line-height:14px;height:14px;transform:scaleX(0.9167);">OK</div>
<div class="btn" style="left:1440px;width:76px"></div>
<div class="t" style="left:1460.88px;top:576px;font-size:12px;line-height:14px;height:14px;transform:scaleX(0.9167);">Cancel</div>
<div class="btn" style="left:1526px;width:81px"></div>
<div class="t" style="left:1552.74px;top:576px;font-size:12px;line-height:14px;height:14px;transform:scaleX(0.9167);">Apply</div>
<svg class="a" style="left:1603px;top:601px" width="12" height="12"><rect x="9" y="9" width="2" height="2" fill="#b0b4bc"/><rect x="6" y="9" width="2" height="2" fill="#b0b4bc"/><rect x="3" y="9" width="2" height="2" fill="#b0b4bc"/><rect x="9" y="6" width="2" height="2" fill="#b0b4bc"/><rect x="6" y="6" width="2" height="2" fill="#b0b4bc"/><rect x="9" y="3" width="2" height="2" fill="#b0b4bc"/></svg>
<div id="win"></div>
</body></html>
